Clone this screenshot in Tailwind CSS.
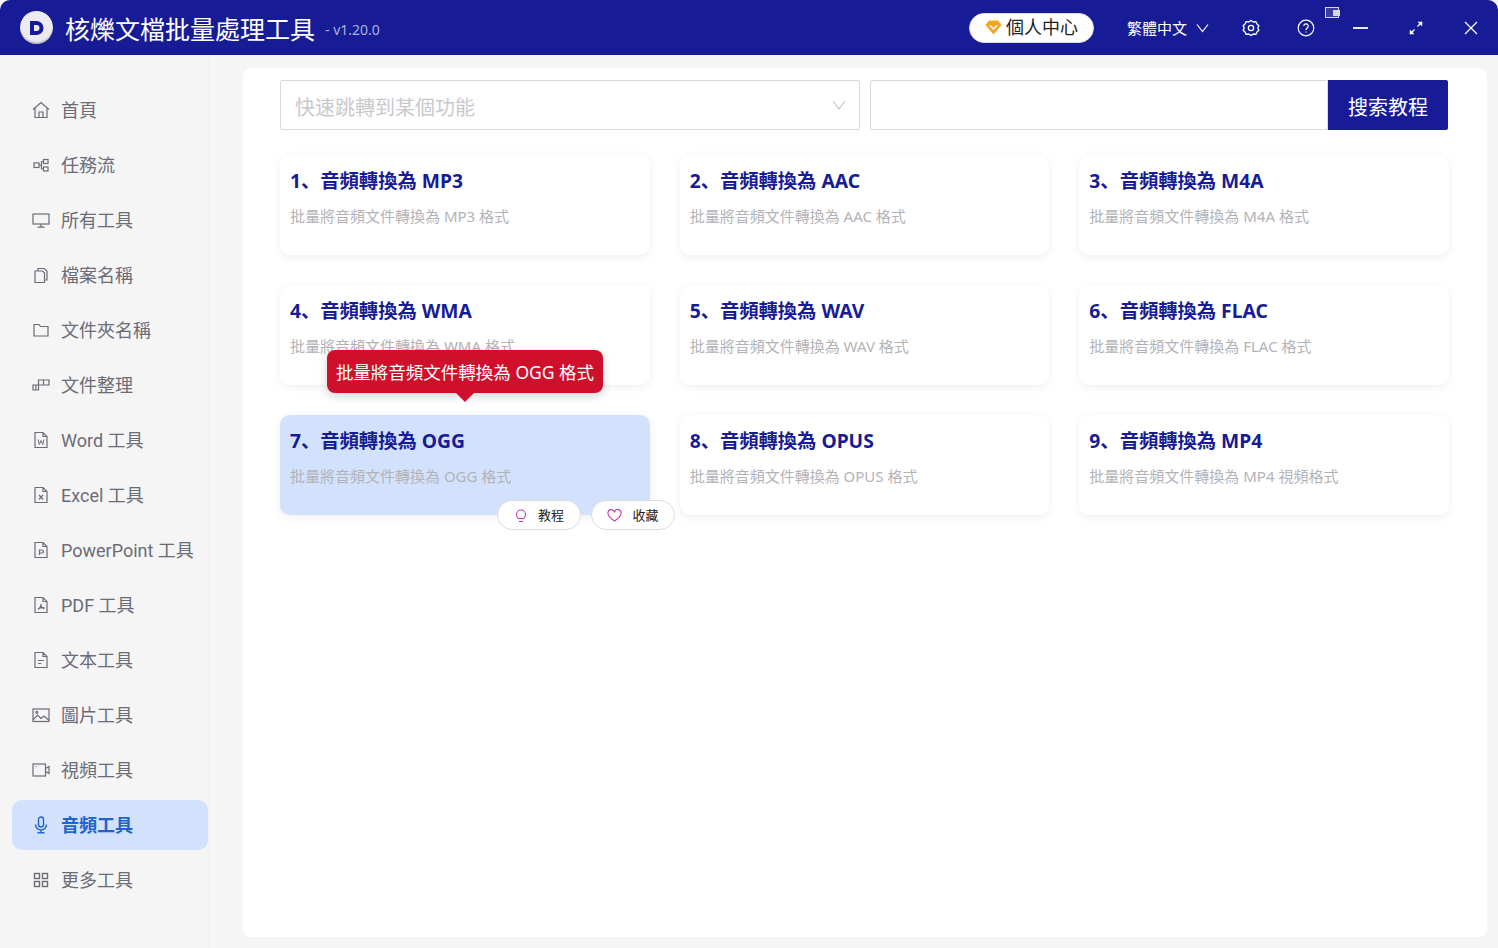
<!DOCTYPE html>
<html lang="zh-CN">
<head>
    <meta charset="UTF-8">
    <title>核爍文檔批量處理工具</title>
    <script src="https://cdn.jsdelivr.net/npm/@tailwindcss/browser@4"></script>
</head>
<body class="w-[1498px] h-[948px] overflow-hidden bg-white font-['Noto_Sans','Noto_Sans_CJK_SC',sans-serif]">
    <div class="h-[948px] flex flex-col bg-[#f5f5f6]">
        <!-- title bar -->
        <header class="h-[55px] shrink-0 bg-[#171c96] rounded-t-[10px] flex items-center text-white relative">
            <div class="ml-[20px] w-[33px] h-[33px] rounded-full bg-[#ececf0] shadow-[inset_0_-2px_1px_rgba(0,0,0,0.18)] flex items-center justify-center">
                <svg width="16" height="16" viewBox="0 0 16 16"><path d="M1 1h6.500a7 7 0 0 1 0 14H1z" fill="#171c96"/><path d="M5 5h2.500a3 3 0 0 1 0 6H5z" fill="#ececf0"/></svg>
            </div>
            <div class="ml-[12px] mt-[3px] text-[25px] leading-none">核爍文檔批量處理工具</div>
            <div class="ml-[10px] mt-[3px] text-[14px] text-[#a9b4dc]">- v1.20.0</div>
            <div class="ml-auto flex items-center">
                <div class="mr-[1px] w-[125px] h-[30px] rounded-full bg-white border border-[#d8d8e4] flex items-center justify-center gap-[4px] text-[#222] text-[18px]">
                    <svg width="17" height="15" viewBox="0 0 17 15"><path d="M4 .500h9L16.500 5 8.500 14.500.500 5z" fill="#f5a524"/><path d="M5 5.500l3.500 3.500L12 5.500" fill="none" stroke="#fff" stroke-width="1.500"/></svg>
                    個人中心
                </div>
                <div class="ml-[32px] mt-[2px] text-[15px] leading-none">繁體中文</div>
                <svg class="ml-[9px]" width="13" height="10" viewBox="0 0 13 10"><path d="M1 1.500l5.500 7 5.500-7" fill="none" stroke="#fff" stroke-width="1.200"/></svg>
                <svg class="ml-[33px]" width="18" height="18" viewBox="0 0 24 24" fill="none" stroke="#fff" stroke-width="1.800" stroke-linejoin="round"><path d="M12 2l3 2 3.500-.5 1.500 3.200 2.500 2.300L21 12l1.500 3-2.500 2.300-1.500 3.200L15 20l-3 2-3-2-3.500.5L4 17.300 1.500 15 3 12 1.500 9 4 6.700l1.500-3.200L9 4z"/><circle cx="12" cy="12" r="3.500"/></svg>
                <svg class="ml-[37px]" width="18" height="18" viewBox="0 0 18 18" fill="none" stroke="#fff" stroke-width="1.200"><circle cx="9" cy="9" r="7.800"/><path d="M6.800 7a2.200 2.200 0 1 1 3.400 1.900c-.8.500-1.200 1-1.200 2"/><path d="M9 12.400v1.200"/></svg>
                <div class="ml-[38px] w-[15px] h-[2px] bg-[#e8e8f4]"></div>
                <svg class="ml-[40px]" width="16" height="16" viewBox="0 0 16 16" fill="#fff" stroke="#fff" stroke-width="1.300"><path d="M2 14l4.500-4.500M9.500 6.500L14 2" fill="none"/><path d="M2 14v-4l4 4zM14 2v4l-4-4z" stroke-width=".5"/></svg>
                <svg class="ml-[40px] mr-[20px]" width="14" height="14" viewBox="0 0 14 14" fill="none" stroke="#fff" stroke-width="1.300"><path d="M1 1l12 12M13 1L1 13"/></svg>
            </div>
            <!-- tray badge over the title bar -->
            <div class="absolute left-[1325px] top-[7px] w-[14px] h-[11px] border border-[#d8d8e4] bg-[#3a3f9e]">
                <div class="absolute right-[-2px] top-[2px] w-[7px] h-[6px] bg-[#d8d8e4]"></div>
            </div>
        </header>

        <div class="flex-1 flex min-h-0">
            <!-- sidebar -->
            <nav class="w-[209px] shrink-0 pl-[12px] pr-[1px] pt-[30px] flex flex-col gap-[5px] font-['Roboto','Noto_Sans_CJK_SC',sans-serif] text-[18px] text-[#6b6c76] border-r border-[#f0f0f1]">
                <a class="h-[50px] w-[196px] flex items-center pl-[20px] gap-[11px]">
                    <svg class="w-[18px]" width="18" height="18" viewBox="0 0 18 18" fill="none" stroke="currentColor" stroke-width="1.200"><path d="M1 8.500L9 1.500l8 7M3 7v9.500h12V7M7 16.500V11h4v5.500"/></svg>
                    <span class="mt-[1px]">首頁</span>
                </a>
                <a class="h-[50px] w-[196px] flex items-center pl-[20px] gap-[11px]">
                    <svg class="w-[18px]" width="18" height="18" viewBox="0 0 18 18" fill="none" stroke="currentColor" stroke-width="1.200"><rect x="2" y="7" width="5" height="4.500"/><rect x="11.500" y="3.500" width="4.500" height="4"/><rect x="11.500" y="11" width="4.500" height="4"/><path d="M7 9.200h2.500V5.500h2M9.500 9.200V13h2"/></svg>
                    <span class="mt-[1px]">任務流</span>
                </a>
                <a class="h-[50px] w-[196px] flex items-center pl-[20px] gap-[11px]">
                    <svg class="w-[18px]" width="18" height="18" viewBox="0 0 18 18" fill="none" stroke="currentColor" stroke-width="1.200"><rect x="1" y="3" width="16" height="10"/><path d="M9 13v3M5.500 16.200h7"/></svg>
                    <span class="mt-[1px]">所有工具</span>
                </a>
                <a class="h-[50px] w-[196px] flex items-center pl-[20px] gap-[11px]">
                    <svg class="w-[18px]" width="18" height="18" viewBox="0 0 18 18" fill="none" stroke="currentColor" stroke-width="1.200"><path d="M3 5h7.500l2 2v9.500H3z"/><path d="M6 5V2.500h6l3 2.500v9h-2.500"/></svg>
                    <span class="mt-[1px]">檔案名稱</span>
                </a>
                <a class="h-[50px] w-[196px] flex items-center pl-[20px] gap-[11px]">
                    <svg class="w-[18px]" width="18" height="18" viewBox="0 0 18 18" fill="none" stroke="currentColor" stroke-width="1.200"><path d="M2 3.500h5l1.500 2H16v9.500H2z"/></svg>
                    <span class="mt-[1px]">文件夾名稱</span>
                </a>
                <a class="h-[50px] w-[196px] flex items-center pl-[20px] gap-[11px]">
                    <svg class="w-[18px]" width="18" height="18" viewBox="0 0 18 18" fill="none" stroke="currentColor" stroke-width="1.200"><path d="M1 9h5.500v5H1zM6.500 9V4h5v5zM11.500 4H17v5h-5.500M3.800 9v5"/></svg>
                    <span class="mt-[1px]">文件整理</span>
                </a>
                <a class="h-[50px] w-[196px] flex items-center pl-[20px] gap-[11px]">
                    <svg class="w-[18px]" width="18" height="18" viewBox="0 0 18 18" fill="none" stroke="currentColor" stroke-width="1.200"><path d="M3 1.500h8L15 5.500v11H3zM11 1.500v4h4"/><path d="M6 8.500l1.300 5L9 9.500l1.700 4L12 8.500" stroke-width="1"/></svg>
                    <span class="mt-[1px]">Word 工具</span>
                </a>
                <a class="h-[50px] w-[196px] flex items-center pl-[20px] gap-[11px]">
                    <svg class="w-[18px]" width="18" height="18" viewBox="0 0 18 18" fill="none" stroke="currentColor" stroke-width="1.200"><path d="M3 1.500h8L15 5.500v11H3zM11 1.500v4h4"/><path d="M7 9l4 4.500M11 9l-4 4.500"/></svg>
                    <span class="mt-[1px]">Excel 工具</span>
                </a>
                <a class="h-[50px] w-[196px] flex items-center pl-[20px] gap-[11px]">
                    <svg class="w-[18px]" width="18" height="18" viewBox="0 0 18 18" fill="none" stroke="currentColor" stroke-width="1.200"><path d="M3 1.500h8L15 5.500v11H3zM11 1.500v4h4"/><path d="M7.500 14V9h2.500a1.500 1.500 0 0 1 0 3H7.500"/></svg>
                    <span class="mt-[1px]">PowerPoint 工具</span>
                </a>
                <a class="h-[50px] w-[196px] flex items-center pl-[20px] gap-[11px]">
                    <svg class="w-[18px]" width="18" height="18" viewBox="0 0 18 18" fill="none" stroke="currentColor" stroke-width="1.200"><path d="M3 1.500h8L15 5.500v11H3zM11 1.500v4h4"/><path d="M9 8c0 2.500-1.500 4.500-3 5.500M9 10c1 1.500 2 2.500 3.500 2.800M6.500 12.500c2-.8 4-1 6-.7"/></svg>
                    <span class="mt-[1px]">PDF 工具</span>
                </a>
                <a class="h-[50px] w-[196px] flex items-center pl-[20px] gap-[11px]">
                    <svg class="w-[18px]" width="18" height="18" viewBox="0 0 18 18" fill="none" stroke="currentColor" stroke-width="1.200"><path d="M3 1.500h8L15 5.500v11H3zM11 1.500v4h4M6 9.500h6M6 12.500h3.500"/></svg>
                    <span class="mt-[1px]">文本工具</span>
                </a>
                <a class="h-[50px] w-[196px] flex items-center pl-[20px] gap-[11px]">
                    <svg class="w-[18px]" width="18" height="18" viewBox="0 0 18 18" fill="none" stroke="currentColor" stroke-width="1.200"><rect x="1" y="3" width="16" height="12.500"/><path d="M1 14l4.500-5 3.500 3.500 3-2.500 5 4.500"/><circle cx="4.800" cy="6.300" r="1"/></svg>
                    <span class="mt-[1px]">圖片工具</span>
                </a>
                <a class="h-[50px] w-[196px] flex items-center pl-[20px] gap-[11px]">
                    <svg class="w-[18px]" width="18" height="18" viewBox="0 0 18 18" fill="none" stroke="currentColor" stroke-width="1.200"><rect x="1" y="3" width="12.500" height="12"/><path d="M13.500 7.500l3.500-2v7l-3.500-2"/><path d="M3.500 5.500h1"/></svg>
                    <span class="mt-[1px]">視頻工具</span>
                </a>
                <a class="h-[50px] w-[196px] flex items-center pl-[20px] gap-[11px] rounded-[10px] bg-[#d2e2fd] text-[#2262cc] font-bold">
                    <svg class="w-[18px]" width="18" height="18" viewBox="0 0 18 18" fill="none" stroke="currentColor" stroke-width="1.400"><rect x="6.500" y="1" width="5" height="10" rx="2.500"/><path d="M3.500 8.500a5.500 5.500 0 0 0 11 0M9 14v3M5.500 16.800h7"/></svg>
                    <span class="mt-[1px]">音頻工具</span>
                </a>
                <a class="h-[50px] w-[196px] flex items-center pl-[20px] gap-[11px]">
                    <svg class="w-[18px]" width="18" height="18" viewBox="0 0 18 18" fill="none" stroke="currentColor" stroke-width="1.400"><rect x="2.500" y="2.500" width="5" height="5"/><rect x="10.500" y="2.500" width="5" height="5"/><rect x="2.500" y="10.500" width="5" height="5"/><rect x="10.500" y="10.500" width="5" height="5"/></svg>
                    <span class="mt-[1px]">更多工具</span>
                </a>
            </nav>

            <!-- main panel -->
            <main class="ml-[34px] mt-[13px] mb-[11px] w-[1244px] bg-white rounded-[8px] pl-[37px] pt-[12px] relative">
                <div class="flex h-[50px] w-[1168px]">
                    <div class="w-[580px] border border-[#d9d9dc] rounded-[2px] flex items-center justify-between pl-[14px] pr-[13px] text-[20px] text-[#c9c9cd]">
                        <span class="mt-[5px]">快速跳轉到某個功能</span>
                        <svg width="14" height="10" viewBox="0 0 14 10"><path d="M1 1l6 8 6-8" fill="none" stroke="#c4c4c8" stroke-width="1.100"/></svg>
                    </div>
                    <div class="ml-[10px] flex-1 border border-[#d9d9dc] rounded-l-[2px]"></div>
                    <div class="w-[120px] bg-[#171c96] rounded-r-[2px] pt-[5px] flex items-center justify-center text-white text-[20px]">搜索教程</div>
                </div>

                <div class="mt-[25px] w-[1169px] grid grid-cols-3 gap-x-[30px] gap-y-[30px]">
                    <div class="h-[100px] rounded-[10px] bg-white shadow-[0_2px_10px_rgba(0,0,0,0.07)] pl-[10px] pt-[11px]">
                        <div class="text-[19.3px] leading-[30px] font-bold text-[#171c96]">1、音頻轉換為 MP3</div>
                        <div class="mt-[10px] text-[15px] leading-[20px] text-[#b3b3b7]">批量將音頻文件轉換為 MP3 格式</div>
                    </div>
                    <div class="h-[100px] rounded-[10px] bg-white shadow-[0_2px_10px_rgba(0,0,0,0.07)] pl-[10px] pt-[11px]">
                        <div class="text-[19.3px] leading-[30px] font-bold text-[#171c96]">2、音頻轉換為 AAC</div>
                        <div class="mt-[10px] text-[15px] leading-[20px] text-[#b3b3b7]">批量將音頻文件轉換為 AAC 格式</div>
                    </div>
                    <div class="h-[100px] rounded-[10px] bg-white shadow-[0_2px_10px_rgba(0,0,0,0.07)] pl-[10px] pt-[11px]">
                        <div class="text-[19.3px] leading-[30px] font-bold text-[#171c96]">3、音頻轉換為 M4A</div>
                        <div class="mt-[10px] text-[15px] leading-[20px] text-[#b3b3b7]">批量將音頻文件轉換為 M4A 格式</div>
                    </div>
                    <div class="h-[100px] rounded-[10px] bg-white shadow-[0_2px_10px_rgba(0,0,0,0.07)] pl-[10px] pt-[11px]">
                        <div class="text-[19.3px] leading-[30px] font-bold text-[#171c96]">4、音頻轉換為 WMA</div>
                        <div class="mt-[10px] text-[15px] leading-[20px] text-[#b3b3b7]">批量將音頻文件轉換為 WMA 格式</div>
                    </div>
                    <div class="h-[100px] rounded-[10px] bg-white shadow-[0_2px_10px_rgba(0,0,0,0.07)] pl-[10px] pt-[11px]">
                        <div class="text-[19.3px] leading-[30px] font-bold text-[#171c96]">5、音頻轉換為 WAV</div>
                        <div class="mt-[10px] text-[15px] leading-[20px] text-[#b3b3b7]">批量將音頻文件轉換為 WAV 格式</div>
                    </div>
                    <div class="h-[100px] rounded-[10px] bg-white shadow-[0_2px_10px_rgba(0,0,0,0.07)] pl-[10px] pt-[11px]">
                        <div class="text-[19.3px] leading-[30px] font-bold text-[#171c96]">6、音頻轉換為 FLAC</div>
                        <div class="mt-[10px] text-[15px] leading-[20px] text-[#b3b3b7]">批量將音頻文件轉換為 FLAC 格式</div>
                    </div>
                    <!-- hovered card with tooltip and action pills -->
                    <div class="h-[100px] rounded-[10px] bg-[#d2e2fd] shadow-[0_2px_10px_rgba(0,0,0,0.07)] pl-[10px] pt-[11px] relative">
                        <div class="text-[19.3px] leading-[30px] font-bold text-[#171c96]">7、音頻轉換為 OGG</div>
                        <div class="mt-[10px] text-[15px] leading-[20px] text-[#b3b3b7]">批量將音頻文件轉換為 OGG 格式</div>
                        <div class="absolute left-[47px] top-[-65px] w-[276px] h-[43px] rounded-[8px] bg-[#cf102d] shadow-[0_3px_10px_rgba(0,0,0,0.18)] pt-[1px] flex items-center justify-center text-white text-[17.5px] whitespace-nowrap">批量將音頻文件轉換為 OGG 格式</div>
                        <div class="absolute left-[176px] top-[-22px] w-0 h-0 border-x-[9px] border-x-transparent border-t-[9px] border-t-[#cf102d]"></div>
                        <div class="absolute left-[217px] top-[85px] w-[84px] h-[30px] rounded-full bg-white border border-[#dcdcdc] pt-[1px] flex items-center justify-center gap-[10px] text-[13px] text-[#222]">
                            <svg width="14" height="15" viewBox="0 0 14 15" fill="none" stroke="#c03aa8" stroke-width="1.100"><path d="M4.500 10.500C3 9.500 2.500 8 2.500 6.500a4.500 4.500 0 0 1 9 0c0 1.500-.5 3-2 4z"/><path d="M5 13.500h4"/></svg>
                            教程
                        </div>
                        <div class="absolute left-[311px] top-[85px] w-[84px] h-[30px] rounded-full bg-white border border-[#dcdcdc] pt-[1px] flex items-center justify-center gap-[10px] text-[13px] text-[#222]">
                            <svg width="15" height="13" viewBox="0 0 15 13" fill="none" stroke="#c03aa8" stroke-width="1.100"><path d="M7.500 12C3 9 1 7 1 4.500A3.300 3.300 0 0 1 7.500 3.300 3.300 3.300 0 0 1 14 4.500C14 7 12 9 7.500 12z"/></svg>
                            收藏
                        </div>
                    </div>
                    <div class="h-[100px] rounded-[10px] bg-white shadow-[0_2px_10px_rgba(0,0,0,0.07)] pl-[10px] pt-[11px]">
                        <div class="text-[19.3px] leading-[30px] font-bold text-[#171c96]">8、音頻轉換為 OPUS</div>
                        <div class="mt-[10px] text-[15px] leading-[20px] text-[#b3b3b7]">批量將音頻文件轉換為 OPUS 格式</div>
                    </div>
                    <div class="h-[100px] rounded-[10px] bg-white shadow-[0_2px_10px_rgba(0,0,0,0.07)] pl-[10px] pt-[11px]">
                        <div class="text-[19.3px] leading-[30px] font-bold text-[#171c96]">9、音頻轉換為 MP4</div>
                        <div class="mt-[10px] text-[15px] leading-[20px] text-[#b3b3b7]">批量將音頻文件轉換為 MP4 視頻格式</div>
                    </div>
                </div>
            </main>
        </div>
    </div>
</body>
</html>
